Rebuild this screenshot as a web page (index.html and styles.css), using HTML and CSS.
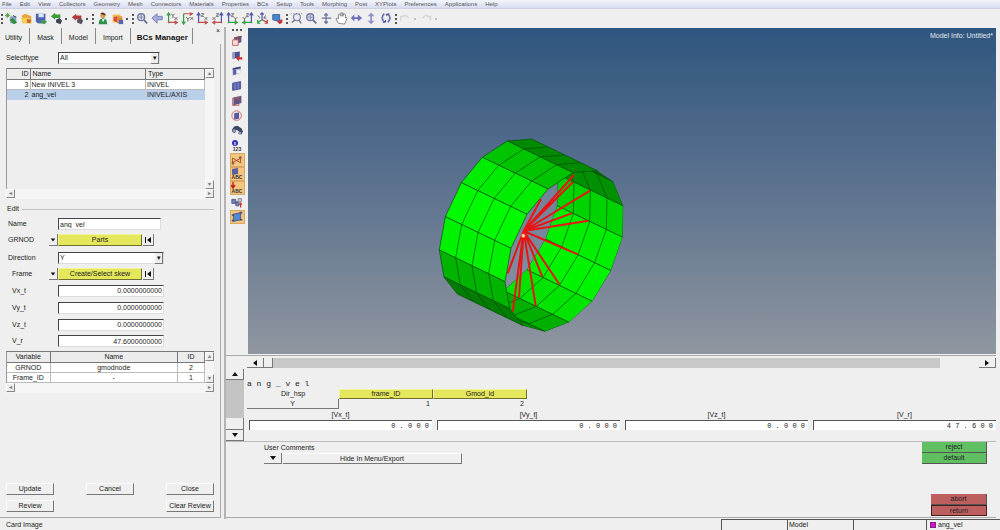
FILE: index.html
```html
<!DOCTYPE html>
<html lang="en">
<head>
<meta charset="utf-8">
<title>BCs Manager</title>
<link rel="stylesheet" href="styles.css">
</head>
<body>
<svg class="defs" aria-hidden="true">
  <symbol id="new" viewBox="0 0 15 15"><path d="M3 1v6M0 4h6M1 2l4 4M5 2L1 6" stroke="#4a9a3a"/><path d="M6 5h7v8H6z" fill="#8aa0c8"/><path d="M5 9l4-2 5 5-4 2z" fill="#2f8f3a"/><path d="M9 4l4 2" stroke="#333"/></symbol>
  <symbol id="open" viewBox="0 0 15 15"><path d="M2 4l4-2 7 3v8H3z" fill="#e9a63c"/><path d="M1 7h10l3 6H3z" fill="#f7cf5b"/><path d="M8 8l5 1-1 4-4-1z" fill="#c76a28"/></symbol>
  <symbol id="save" viewBox="0 0 15 15"><path d="M1 2h11v11H3L1 11z" fill="#4d62b5"/><path d="M4 2h6v4H4z" fill="#dfe6f5"/><path d="M4 9h7v4H4z" fill="#52708f"/><path d="M8 9l6 2-3 3-4-2z" fill="#3d9b52"/></symbol>
  <symbol id="import" viewBox="0 0 15 15"><path d="M1 5l5-4v2h6v4H6v2z" fill="#3d9b3a"/><path d="M7 9l4-2 3 3-2 4-5-2z" fill="#3b4450"/></symbol>
  <symbol id="export" viewBox="0 0 15 15"><path d="M1 6l5-4v2h6v4H6v2z" fill="#b5393d"/><path d="M7 9l4-2 3 3-2 4-5-2z" fill="#5a5260"/></symbol>
  <symbol id="user" viewBox="0 0 15 15"><circle cx="8" cy="4" r="3" fill="#d8a05a"/><path d="M5 2q3-3 6 1v1L7 3z" fill="#5b3a1c"/><path d="M3 14l1-5 4-2 4 2 1 5z" fill="#2d8c45"/><path d="M7 8l1 4 2-4z" fill="#fff"/></symbol>
  <symbol id="pages" viewBox="0 0 15 15"><path d="M2 3h9v9H2z" fill="#f2b84e"/><path d="M3 6l4-1v7l-4-2z" fill="#d94a3c"/><path d="M7 5h6v8H7z" fill="#e58e35"/><path d="M9 9h5v5H9z" fill="#5067b0"/></symbol>
  <symbol id="zoom" viewBox="0 0 15 15"><circle cx="6" cy="6" r="4" fill="#d8daec" stroke="#7077a5" stroke-width="1.5"/><path d="M9 9l4 4" stroke="#666a8c" stroke-width="2"/><path d="M3 6h6M6 3v6" stroke="#8085ad"/></symbol>
  <symbol id="zoomout" viewBox="0 0 15 15"><circle cx="8" cy="6" r="4" fill="#e8e9f4" stroke="#8086ad" stroke-width="1.4"/><path d="M10 9l3 4M2 12l4-3" stroke="#666a8c" stroke-width="1.5"/><path d="M1 2h13" stroke="#777" stroke-dasharray="1 2"/></symbol>
  <symbol id="back" viewBox="0 0 15 15"><path d="M1 7l6-5v3h6v4H7v4z" fill="#a6acde" stroke="#7278b8"/></symbol>
  <symbol id="ax1" viewBox="0 0 15 15"><path d="M3 13V2M1 4l2-3 2 3" fill="none" stroke="#34a046" stroke-width="1.4"/><path d="M2 12h10M10 10l3 2-3 2" fill="none" stroke="#c0504c" stroke-width="1.4"/><path d="M6 2l2 2 2-2M8 4v3M10 6l3 3M13 6l-3 3" fill="none" stroke="#555"/></symbol>
  <symbol id="ax2" viewBox="0 0 15 15"><path d="M3 2h10M10 1l3 1-3 2" fill="none" stroke="#c0504c" stroke-width="1.4"/><path d="M3 2v11M1 11l2 3 2-3" fill="none" stroke="#34a046" stroke-width="1.4"/><path d="M6 6l2 2 2-2M8 8v3M11 6l3 3M14 6l-3 3" fill="none" stroke="#555"/></symbol>
  <symbol id="ax3" viewBox="0 0 15 15"><path d="M3 13V2M1 4l2-3 2 3" fill="none" stroke="#4d55b0" stroke-width="1.4"/><path d="M2 12h10M10 10l3 2-3 2" fill="none" stroke="#c0504c" stroke-width="1.4"/><path d="M6 2h3L6 5h3M10 6l3 3M13 6l-3 3" fill="none" stroke="#555"/></symbol>
  <symbol id="ax4" viewBox="0 0 15 15"><path d="M12 13V2M10 4l2-3 2 3" fill="none" stroke="#4d55b0" stroke-width="1.4"/><path d="M13 12H3M5 10l-3 2 3 2" fill="none" stroke="#c0504c" stroke-width="1.4"/><path d="M6 2h3L6 5h3M2 6l3 3M5 6L2 9" fill="none" stroke="#555"/></symbol>
  <symbol id="ax5" viewBox="0 0 15 15"><path d="M3 13V2M1 4l2-3 2 3" fill="none" stroke="#4d55b0" stroke-width="1.4"/><path d="M2 12h10M10 10l3 2-3 2" fill="none" stroke="#34a046" stroke-width="1.4"/><path d="M6 2h3L6 5h3M9 6l2 2 2-2M11 8v2" fill="none" stroke="#555"/></symbol>
  <symbol id="ax6" viewBox="0 0 15 15"><path d="M12 13V2M10 4l2-3 2 3" fill="none" stroke="#4d55b0" stroke-width="1.4"/><path d="M13 12H3M5 10l-3 2 3 2" fill="none" stroke="#34a046" stroke-width="1.4"/><path d="M6 2h3L6 5h3M2 6l2 2 2-2M4 8v2" fill="none" stroke="#555"/></symbol>
  <symbol id="iso" viewBox="0 0 15 15"><path d="M7 9V1M5 3l2-2 2 2" fill="none" stroke="#4d55b0" stroke-width="1.4"/><path d="M7 9l-5 3M2 9v4h3" fill="none" stroke="#34a046" stroke-width="1.4"/><path d="M7 9l6 3M10 13h3V9" fill="none" stroke="#b64848" stroke-width="1.4"/><path d="M2 4l3 3M11 4l-2 3h3" fill="none" stroke="#555"/></symbol>
  <symbol id="flag" viewBox="0 0 15 15"><path d="M2 3h8v8l-8-2z" fill="#4a86cf" stroke="#2e5f9e"/><path d="M7 11l6-3v4l-3 2z" fill="#c92f2f"/></symbol>
  <symbol id="move" viewBox="0 0 15 15"><path d="M7 2v11M2 7h11M5 4l2-2 2 2M5 11l2 2 2-2" fill="none" stroke="#70759f" stroke-width="1.5"/></symbol>
  <symbol id="hand" viewBox="0 0 15 15"><path d="M4 13L1 8l2-1 1 1V3l2-1 1 3V1h2v4l1-3 2 1v4l1-1 1 1-3 7z" fill="#fff" stroke="#777"/></symbol>
  <symbol id="horiz" viewBox="0 0 15 15"><path d="M1 7l4-4v3h4V3l5 4-5 4V8H5v3z" fill="#6b6fba"/></symbol>
  <symbol id="vert" viewBox="0 0 15 15"><path d="M7 1l4 4H8v5h3l-4 4-4-4h3V5H3z" fill="#8c90c9"/></symbol>
  <symbol id="rotate" viewBox="0 0 15 15"><path d="M5 2Q0 7 5 12M9 2q5 5 0 10" fill="none" stroke="#6d71b4" stroke-width="2"/><path d="M3 12h4V9zM11 2H7v3z" fill="#45498e"/></symbol>
  <symbol id="undo" viewBox="0 0 15 15"><path d="M2 10V5h4M2 7q5-6 9 0" fill="none" stroke="#d5d5d5" stroke-width="1.6"/></symbol>
  <symbol id="redo" viewBox="0 0 15 15"><path d="M12 10V5H8M12 7Q7 1 3 7" fill="none" stroke="#d5d5d5" stroke-width="1.6"/></symbol>
  <symbol id="box1" viewBox="0 0 15 15"><path d="M4 3l9-2v8l-9 3z" fill="#5f5a86"/><path d="M2 6h7v7H2z" fill="#f6dcdc" stroke="#c65353"/><path d="M4 3l9-2v2L4 5z" fill="#8b4350"/></symbol>
  <symbol id="box2" viewBox="0 0 15 15"><path d="M2 3l9-1v7l-9 2z" fill="#4c4f8e"/><path d="M2 3l3 0v8l-3 0z" fill="#9398c7"/><path d="M6 10l4-3v2h4v3h-4v2z" fill="#d02b2b"/></symbol>
  <symbol id="box3" viewBox="0 0 15 15"><path d="M2 4l10-2v8l-10 3z" fill="#9aa0c4"/><path d="M2 4l10-2v2L2 6z" fill="#404377"/><path d="M7 6h5v4l-5 1z" fill="#eef"/><path d="M3 6h3v6H3z" fill="#555b91"/></symbol>
  <symbol id="box4" viewBox="0 0 15 15"><path d="M2 4l10-2v9l-10 2z" fill="#5a62ae" stroke="#42477f"/><path d="M5 4v8M9 3v8" stroke="#8b92d0"/></symbol>
  <symbol id="box5" viewBox="0 0 15 15"><path d="M3 3l10-2v9l-10 3z" fill="#6c567f"/><path d="M2 4h8v9H2z" fill="none" stroke="#b84e50"/><path d="M5 6h5v5H5z" fill="#51568f"/></symbol>
  <symbol id="box6" viewBox="0 0 15 15"><circle cx="7" cy="7" r="6" fill="#f5e3e3" stroke="#c65b5b"/><path d="M4 4l6-1v8l-6 1z" fill="#555ba0"/></symbol>
  <symbol id="bino" viewBox="0 0 15 15"><path d="M1 6l3-4 4-1 5 3 2 4-2 4-4-1 1-3-3-2-2 4-3-1z" fill="#3d4562"/><circle cx="4" cy="7" r="2" fill="#8b9ac4"/><circle cx="11" cy="10" r="2" fill="#8b9ac4"/></symbol>
  <symbol id="info" viewBox="0 0 12 7"><circle cx="4" cy="3" r="3" fill="#3434b8"/><path d="M4 2v3" stroke="#fff"/></symbol>
  <symbol id="line" viewBox="0 0 15 15"><path d="M2 12V5l10 6V3" fill="none" stroke="#7b4b28"/><path d="M1 11l12-6" stroke="#d02b2b"/><path d="M1 10h3v3H1zM10 3h3v3h-3z" fill="#8e5c54"/></symbol>
  <symbol id="cube" viewBox="0 0 12 7"><path d="M1 1l6-1v6l-6 1z" fill="#5a5fa5"/></symbol>
  <symbol id="load" viewBox="0 0 12 7"><path d="M2 0v6M0 3l2 3 2-3" fill="none" stroke="#b22" stroke-width="1.4"/></symbol>
  <symbol id="parts" viewBox="0 0 15 15"><path d="M1 3h5v5H1zM6 6h4v5H6z" fill="#7280b2" stroke="#4b5385"/><path d="M9 2h4v4H9z" fill="#c9cde5" stroke="#777"/><path d="M12 7v6M10 9h4" stroke="#c33" stroke-width="1.5"/></symbol>
  <symbol id="mesh" viewBox="0 0 15 15"><path d="M3 4l9-2v9l-9 2z" fill="#4f8bd1" stroke="#444a80"/><path d="M1 5h3M11 2h3M1 12h3M11 11h3" stroke="#444a80" stroke-width="2"/></symbol>
  <symbol id="first" viewBox="0 0 8 8"><path d="M1 1h1v6H1zM7 1v6L3 4z" fill="#111"/></symbol>
  <symbol id="down" viewBox="0 0 8 8"><path d="M1 2h6L4 6z" fill="#111"/></symbol>
  <symbol id="up" viewBox="0 0 8 8"><path d="M1 6h6L4 2z" fill="#111"/></symbol>
  <symbol id="left" viewBox="0 0 8 8"><path d="M6 1v6L2 4z" fill="#111"/></symbol>
  <symbol id="right" viewBox="0 0 8 8"><path d="M2 1v6l4-3z" fill="#111"/></symbol>
</svg>

<nav class="menubar">
  <button>File</button><button>Edit</button><button>View</button><button>Collectors</button><button>Geometry</button><button>Mesh</button><button>Connectors</button><button>Materials</button><button>Properties</button><button>BCs</button><button>Setup</button><button>Tools</button><button>Morphing</button><button>Post</button><button>XYPlots</button><button>Preferences</button><button>Applications</button><button>Help</button>
</nav>

<div class="toolbar">
  <i class="grip"></i>
  <button aria-label="New"><svg><use href="#new"/></svg></button>
  <button aria-label="Open"><svg><use href="#open"/></svg></button>
  <button aria-label="Save"><svg><use href="#save"/></svg></button>
  <button aria-label="Import"><svg><use href="#import"/></svg></button><i class="more"></i>
  <button aria-label="Export"><svg><use href="#export"/></svg></button><i class="more"></i>
  <i class="grip"></i>
  <button aria-label="User profile"><svg><use href="#user"/></svg></button>
  <button aria-label="Pages"><svg><use href="#pages"/></svg></button><i class="more"></i>
  <i class="grip"></i>
  <button aria-label="Fit"><svg><use href="#zoom"/></svg></button>
  <button aria-label="Previous view"><svg><use href="#back"/></svg></button>
  <button aria-label="XY view"><svg><use href="#ax1"/></svg></button>
  <button aria-label="YX view"><svg><use href="#ax2"/></svg></button>
  <button aria-label="XZ view"><svg><use href="#ax3"/></svg></button>
  <button aria-label="ZX view"><svg><use href="#ax4"/></svg></button>
  <button aria-label="YZ view"><svg><use href="#ax5"/></svg></button>
  <button aria-label="ZY view"><svg><use href="#ax6"/></svg></button>
  <button aria-label="Iso view"><svg><use href="#iso"/></svg></button>
  <button aria-label="Reverse view"><svg><use href="#flag"/></svg></button>
  <i class="grip"></i>
  <button aria-label="Zoom out"><svg><use href="#zoomout"/></svg></button>
  <button aria-label="Circle zoom"><svg><use href="#zoom"/></svg></button>
  <button aria-label="Center"><svg><use href="#move"/></svg></button>
  <button aria-label="Pan"><svg><use href="#hand"/></svg></button>
  <button aria-label="Rotate horizontally"><svg><use href="#horiz"/></svg></button>
  <button aria-label="Rotate vertically"><svg><use href="#vert"/></svg></button>
  <button aria-label="Spin"><svg><use href="#rotate"/></svg></button>
  <i class="grip"></i>
  <button aria-label="Undo"><svg><use href="#undo"/></svg></button><i class="more faint"></i>
  <button aria-label="Redo"><svg><use href="#redo"/></svg></button><i class="more faint"></i>
</div>

<main class="main">
  <aside class="panel">
    <div class="tabs">
      <button>Utility</button><button>Mask</button><button>Model</button><button>Import</button><button class="active">BCs Manager</button>
      <button class="close" aria-label="Close panel">×</button>
    </div>
    <div class="panel-body">
      <div class="field type-row">
        <label for="type">Selecttype</label>
        <span class="combo"><select id="type"><option>All</option></select></span>
      </div>

      <div class="listbox">
        <div class="list-main">
          <table class="grid bcs">
            <colgroup><col class="c-id"><col><col class="c-type"></colgroup>
            <thead><tr><th class="num">ID</th><th>Name</th><th>Type</th></tr></thead>
            <tbody>
              <tr><td class="num">3</td><td>New INIVEL 3</td><td>INIVEL</td></tr>
              <tr class="selected"><td class="num">2</td><td>ang_vel</td><td>INIVEL/AXIS</td></tr>
            </tbody>
          </table>
          <div class="vbar"><button aria-label="Scroll up">▴</button><button aria-label="Scroll down">▾</button></div>
        </div>
        <div class="hbar"><button aria-label="Scroll left">◂</button><button aria-label="Scroll right">▸</button></div>
      </div>

      <fieldset class="form">
        <legend>Edit</legend>
        <div class="field"><label for="name">Name</label><i></i><input class="short" id="name" value="ang_vel"></div>
        <div class="field"><span>GRNOD</span><button class="drop" aria-label="GRNOD options"><svg><use href="#down"/></svg></button><span class="pick"><button class="yellow">Parts</button><button class="reset" aria-label="Reset GRNOD"><svg><use href="#first"/></svg></button></span></div>
        <div class="field direction"><label for="dir">Direction</label><i></i><span class="combo"><select id="dir"><option>Y</option></select></span></div>
        <div class="field sub"><span>Frame</span><button class="drop" aria-label="Frame options"><svg><use href="#down"/></svg></button><span class="pick"><button class="yellow">Create/Select skew</button><button class="reset" aria-label="Reset frame"><svg><use href="#first"/></svg></button></span></div>
        <div class="field sub value"><label for="vx">Vx_t</label><i></i><input class="num" id="vx" value="0.0000000000"></div>
        <div class="field sub value"><label for="vy">Vy_t</label><i></i><input class="num" id="vy" value="0.0000000000"></div>
        <div class="field sub value"><label for="vz">Vz_t</label><i></i><input class="num" id="vz" value="0.0000000000"></div>
        <div class="field sub"><label for="vr">V_r</label><i></i><input class="num" id="vr" value="47.6000000000"></div>
      </fieldset>

      <div class="vars">
        <div class="list-main">
          <table class="grid centered">
            <colgroup><col class="c-var"><col><col class="c-vid"></colgroup>
            <thead><tr><th>Variable</th><th>Name</th><th>ID</th></tr></thead>
            <tbody>
              <tr><td>GRNOD</td><td>gmodnode</td><td>2</td></tr>
              <tr><td>Frame_ID</td><td>-</td><td>1</td></tr>
            </tbody>
          </table>
          <div class="vbar"><button aria-label="Scroll up">▴</button><button aria-label="Scroll down">▾</button></div>
        </div>
        <div class="hbar"><button aria-label="Scroll left">◂</button><button aria-label="Scroll right">▸</button></div>
      </div>

      <div class="actions">
        <button>Update</button><button>Cancel</button><button>Close</button>
        <button>Review</button><i></i><button>Clear Review</button>
      </div>
    </div>
  </aside>

  <section class="work">
    <div class="stage">
      <div class="sidebar">
        <i class="hgrip"></i>
        <button aria-label="Mask"><svg><use href="#box1"/></svg></button>
        <button aria-label="Reverse"><svg><use href="#box2"/></svg></button>
        <button aria-label="Unmask adjacent"><svg><use href="#box3"/></svg></button>
        <button aria-label="Unmask all"><svg><use href="#box4"/></svg></button>
        <button aria-label="Mask outside"><svg><use href="#box5"/></svg></button>
        <button aria-label="Spherical clipping"><svg><use href="#box6"/></svg></button>
        <button aria-label="Find"><svg><use href="#bino"/></svg></button>
        <button class="tagged"><svg><use href="#info"/></svg>123</button>
        <button class="on" aria-label="Elements"><svg><use href="#line"/></svg></button>
        <button class="on tagged"><svg><use href="#cube"/></svg>ABC</button>
        <button class="on tagged"><svg><use href="#load"/></svg>ABC</button>
        <button aria-label="Components"><svg><use href="#parts"/></svg></button>
        <button class="on" aria-label="Mesh"><svg><use href="#mesh"/></svg></button>
      </div>
      <div class="viewport">
        <svg class="model" viewBox="248 28 748 326" role="img" aria-label="Cylinder mesh with rigid spider">
          <defs>
            <clipPath id="mouth"><path d="M502 122 550 155 580 228 578 322 543 422 487 514 417 577 345 605 279 587 239 536 225 455 243 355 291 253 354 177 429 128z"/></clipPath>
            <path id="rimIn" d="M305 27 353 60 383 133 381 227 346 327 290 419 220 482 148 510 82 492"/>
            <path id="rimOut" d="M305 27 232 33 157 82 94 158 46 260 28 360 42 441 82 492"/>
            <linearGradient id="hole" x1="0" y1="0" x2="0" y2="1"><stop offset="0" stop-color="#687b95"/><stop offset="1" stop-color="#85909f"/></linearGradient>
          </defs>
          <g transform="translate(430 130) scale(.3333)" stroke="#064b06" stroke-width="2" stroke-linejoin="round">
            <g clip-path="url(#mouth)">
              <path d="M305 27 353 60 550 155 502 122z" fill="#006c00"/>
              <path d="M353 60 383 133 580 228 550 155z" fill="#009000"/>
              <path d="M383 133 381 227 578 322 580 228z" fill="#00d400"/>
              <path d="M381 227 346 327 543 422 578 322z" fill="#00ee00"/>
              <path d="M346 327 290 419 487 514 543 422z" fill="#00f400"/>
              <path d="M290 419 220 482 417 577 487 514z" fill="#00e400"/>
              <path d="M220 482 148 510 345 605 417 577z" fill="#00b000"/>
              <path d="M148 510 82 492 279 587 345 605z" fill="#009200"/>
              <g fill="none">
                <use href="#rimIn" transform="translate(49 24)"/><use href="#rimIn" transform="translate(98 48)"/><use href="#rimIn" transform="translate(148 71)"/>
              </g>
              <path d="M305 27 353 60 383 133 381 227 346 327 290 419 220 482 148 510 82 492 42 441 28 360 46 260 94 158 157 82 232 33z" fill="url(#hole)" stroke="none"/>
            </g>
            <path d="M305 27 232 33 429 128 502 122z" fill="#008a00"/>
            <path d="M232 33 157 82 354 177 429 128z" fill="#00c400"/>
            <path d="M157 82 94 158 291 253 354 177z" fill="#00ec00"/>
            <path d="M94 158 46 260 243 355 291 253z" fill="#00fa00"/>
            <path d="M46 260 28 360 225 455 243 355z" fill="#00f200"/>
            <path d="M28 360 42 441 239 536 225 455z" fill="#00b400"/>
            <path d="M42 441 82 492 279 587 239 536z" fill="#007d00"/>
            <g fill="none">
              <use href="#rimOut" transform="translate(49 24)"/><use href="#rimOut" transform="translate(98 48)"/><use href="#rimOut" transform="translate(148 71)"/>
            </g>
            <path d="M281 303 432 135M281 303 428 157M281 303 480 182M281 303 425 250M281 303 475 272M281 303 443 373M281 303 388 463M281 303 337 440M281 303 317 527M281 303 248 545M281 303 267 502M281 303 333 208M281 303 233 430" fill="none" stroke="#e81414" stroke-width="6"/>
            <circle cx="280" cy="317" r="6" fill="#ffd9a0" stroke="#f33"/>
          </g>
        </svg>
        <p class="model-info">Model Info: Untitled*</p>
      </div>
    </div>

    <div class="card">
      <div class="card-hscroll"><button aria-label="Scroll left"><svg><use href="#left"/></svg></button><i class="thumb"></i><i class="track"></i><i class="gap"></i><button aria-label="Scroll right"><svg><use href="#right"/></svg></button></div>
      <div class="card-main">
        <div class="card-vscroll"><button aria-label="Scroll up"><svg><use href="#up"/></svg></button><i class="track"></i><i class="thumb"></i><button aria-label="Scroll down"><svg><use href="#down"/></svg></button></div>
        <div class="card-body">
          <p class="mono title">a n g _ v e l</p>
          <div class="ids">
            <span>Dir_hsp</span><button class="yellow">frame_ID</button><button class="yellow">Gmod_id</button>
            <button class="dir-value">Y</button><span class="id-value">1</span><span class="id-value">2</span>
          </div>
          <div class="values">
            <label>[Vx_t]<input class="mono" value="0 . 0 0 0"></label>
            <label>[Vy_t]<input class="mono" value="0 . 0 0 0"></label>
            <label>[Vz_t]<input class="mono" value="0 . 0 0 0"></label>
            <label>[V_r]<input class="mono" value="4 7 . 6 0 0"></label>
          </div>
        </div>
      </div>
      <div class="card-foot">
        <div class="comments">
          <span>User Comments</span>
          <div class="comment-pick"><button class="pop" aria-label="Choose comment option"><svg><use href="#down"/></svg></button><button class="wide">Hide In Menu/Export</button></div>
        </div>
        <div class="verdict">
          <div class="pair"><button class="green">reject</button><button class="green">default</button></div>
          <div class="pair narrow"><button class="red">abort</button><button class="red return">return</button></div>
        </div>
      </div>
    </div>
  </section>
</main>

<footer class="status">
  <span class="message">Card Image</span><span class="cell"></span><span class="cell">Model</span><span class="cell mid"></span><span class="cell last"><i class="swatch"></i>ang_vel</span>
</footer>
</body>
</html>
```
FILE: styles.css
```css
* { box-sizing: border-box; margin: 0; padding: 0; }
html, body { height: 100%; }
body {
  display: flex; flex-direction: column;
  background: #efefef; color: #222;
  font: 7px/10px "Liberation Sans", Arial, sans-serif;
}
button, input, select { font: inherit; color: inherit; border: 0; border-radius: 0; background: none; outline: 0; min-width: 0; }
button { display: flex; align-items: center; justify-content: center; white-space: nowrap; }
svg { display: block; }
i { font-style: normal; }
.defs { position: absolute; width: 0; height: 0; }
.mono { font-family: "Liberation Mono", monospace; }

/* Menu and toolbar */
.menubar { display: flex; gap: 8px; height: 9px; padding-left: 2px; background: linear-gradient(#f2f4fb, #d9dcf0); border-bottom: 1px solid #cfd2e2; font-size: 6px; line-height: 8px; color: #555; }
.toolbar { display: flex; align-items: center; height: 18px; padding-top: 1px; }
.toolbar button { flex: 0 0 15px; height: 15px; }
.toolbar svg { width: 13px; height: 13px; }
.grip { flex: 0 0 4px; height: 12px; background: radial-gradient(circle at 2px 2px, #555 1px, transparent 1px) 0 0 / 4px 4px; }
.more { flex: 0 0 6px; height: 2px; background: linear-gradient(#555, #555) 1px 0 / 2px 2px no-repeat; }
.more.faint { opacity: .3; }

.main { flex: 1; display: flex; min-height: 0; }

/* Left panel */
.panel { flex: 0 0 226px; display: flex; flex-direction: column; border-right: 2px solid #b3b3b3; padding: 1px 3px 1px 0; }
.tabs { display: flex; align-items: stretch; height: 16px; }
.tabs button { padding: 3px 7px 0; border-right: 1px solid #888; }
.tabs button:first-child { padding-left: 5px; }
.tabs .active { font-weight: bold; font-size: 8px; color: #111; padding: 3px 4px 0 6px; }
.tabs .close { margin-left: auto; border: 0; padding: 0 1px; height: 6px; line-height: 6px; }
.panel-body { flex: 1; display: flex; flex-direction: column; padding: 7px 6px 5px; border-right: 1px solid #aaa; border-bottom: 1px solid #aaa; }
.field { display: grid; grid-template-columns: 43px 9px 106px; align-items: center; height: 12px; }
.field.value { height: 13px; }
.type-row { grid-template-columns: 52px 102px; height: 14px; }
.combo { position: relative; display: block; }
.combo select, .field input { display: block; width: 100%; height: 12px; appearance: none; background: #fff; border: 1px solid #ddd; border-top-color: #444; border-left-color: #444; padding: 0 1px; line-height: 10px; }
.combo::after { content: "▾"; position: absolute; top: 1px; right: 1px; width: 7px; height: 10px; line-height: 9px; text-align: center; background: #eee; border-right: 1px solid #777; border-bottom: 1px solid #777; pointer-events: none; color: #111; }
.field .short { width: 103px; }
.num { text-align: right; }

.listbox { display: flex; flex-direction: column; height: 131px; margin-top: 3px; flex-shrink: 0; }
.list-main { flex: 1; display: flex; align-items: stretch; background: #eee; border-top: 1px solid #777; border-left: 1px solid #999; }
.grid { flex: 1; align-self: flex-start; border-collapse: collapse; table-layout: fixed; width: 100%; }
.grid th { height: 10px; font-weight: normal; text-align: left; background: #ececec; border-right: 1px solid #777; border-bottom: 1px solid #777; line-height: 9px; padding: 0 2px; }
.grid td { height: 10px; line-height: 9px; background: #fff; border-right: 1px solid #bbb; border-bottom: 1px solid #bbb; padding: 0 1px; }
.grid .num { text-align: right; padding-right: 1px; }
.grid .selected td { background: #bacfea; border-color: #bacfea; }
.centered th, .centered td { text-align: center; }
.c-id { width: 23px; } .c-type { width: 59px; } .c-var { width: 43px; } .c-vid { width: 27px; }
.vbar { flex: 0 0 9px; display: flex; flex-direction: column; justify-content: space-between; background: #f5f5f5; }
.hbar { display: flex; justify-content: space-between; height: 10px; background: #f5f5f5; }
.vbar button, .hbar button { width: 9px; height: 9px; background: #eee; border: 1px solid #fff; border-right-color: #888; border-bottom-color: #888; color: #777; line-height: 7px; font-size: 6px; }

.form { border: 0; display: flex; flex-direction: column; gap: 4px; margin-top: 5px; }
.form legend { display: flex; align-items: center; width: 100%; height: 10px; margin-bottom: 4px; padding-left: 1px; gap: 3px; }
.form legend::after { content: ""; flex: 1; height: 1px; background: #c4c4c4; }
.form .field > :first-child { padding-left: 2px; }
.form .sub > :first-child { padding-left: 6px; }
.direction { margin-top: 2px; }
.drop { height: 12px; border-right: 1px solid #777; border-bottom: 1px solid #777; }
.drop svg { width: 6px; height: 6px; }
.pick { display: grid; grid-template-columns: 84px 11px; gap: 1px; }
.yellow { height: 12px; background: #e4e65c; border: 1px solid #f3f49a; border-right-color: #6f6f32; border-bottom-color: #6f6f32; }
.reset { height: 12px; border-right: 1px solid #777; border-bottom: 1px solid #777; }
.reset svg { width: 8px; height: 8px; }
.vars { margin-top: 4px; }
.actions { display: grid; grid-template-columns: 48px 48px 48px; justify-content: space-between; row-gap: 5px; margin-top: auto; }
.actions button { height: 12px; border: 1px solid #fafafa; border-right-color: #777; border-bottom-color: #777; }

/* Graphics area */
.work { flex: 1; min-width: 0; display: flex; flex-direction: column; padding-right: 4px; }
.stage { flex: 1; display: flex; min-height: 0; }
.sidebar { flex: 0 0 22px; display: flex; flex-direction: column; align-items: center; }
.hgrip { width: 13px; height: 6px; background: radial-gradient(circle at 2px 3px, #555 1px, transparent 1px) 0 0 / 4px 6px; }
.sidebar button { flex: 0 0 15px; width: 15px; }
.sidebar svg { width: 12px; height: 12px; }
.sidebar .on { flex-basis: 14px; background: #f6c57e; border: 1px solid #d9a766; }
.sidebar .tagged { flex-direction: column; font-size: 5px; font-weight: bold; line-height: 5px; color: #333; }
.sidebar .tagged svg { height: 7px; }
.viewport { position: relative; flex: 1; min-width: 0; margin-top: 1px; background: linear-gradient(#2f567f, #5d738f 50%, #8f969f); }
.model { position: absolute; inset: 0; width: 100%; height: 100%; }
.model-info { position: absolute; top: 3px; right: 3px; color: #e4e9ef; }

/* Card editor */
.card { flex: 0 0 auto; border-bottom: 1px solid #aaa; margin-bottom: 1px; }
.card svg { width: 8px; height: 8px; }
.card-hscroll { display: flex; height: 14px; margin-top: 1px; padding: 2px 0 1px 21px; border-top: 1px solid #aaa; }
.card-hscroll button { flex: 0 0 17px; border-right: 1px solid #777; border-bottom: 1px solid #777; }
.card-hscroll .thumb { flex: 0 0 9px; border-right: 1px solid #777; border-bottom: 1px solid #777; }
.card-hscroll .track { flex: 1; background: #c8c8c8; }
.card-hscroll .gap { flex: 0 0 39px; }
.card-main { display: flex; height: 73px; border-bottom: 1px solid #bbb; }
.card-vscroll { flex: 0 0 18px; display: flex; flex-direction: column; }
.card-vscroll button { height: 11px; border-right: 1px solid #777; border-bottom: 1px solid #777; }
.card-vscroll .track { flex: 1; background: #c4c4c4; }
.card-vscroll .thumb { height: 12px; border-right: 1px solid #777; border-bottom: 1px solid #777; }
.card-body { flex: 1; padding: 10px 0 0 3px; }
.title { font-size: 8px; }
.ids { display: grid; grid-template-columns: 92px 94px 94px; grid-auto-rows: 10px; text-align: center; }
.ids .yellow { height: 10px; line-height: 8px; }
.dir-value { border-right: 1px solid #777; border-bottom: 1px solid #777; }
.id-value { text-align: right; padding-right: 3px; }
.values { display: grid; grid-template-columns: repeat(4, 1fr); gap: 5px; padding: 1px 0 0 2px; }
.values label { text-align: center; }
.values input { display: block; width: 100%; height: 10px; background: #fff; border-top: 1px solid #555; border-left: 1px solid #555; padding-right: 3px; text-align: right; font-family: "Liberation Mono", monospace; }
.card-foot { display: flex; justify-content: space-between; padding: 0 9px 1px 38px; }
.comments { padding-top: 1px; }
.comment-pick { display: flex; gap: 1px; }
.comment-pick button { height: 11px; border-right: 1px solid #777; border-bottom: 1px solid #777; }
.pop { width: 18px; }
.wide { width: 179px; border-top: 1px solid #fff; }
.verdict { width: 65px; }
.pair button { width: 100%; height: 11px; border-right: 1px solid #555; border-bottom: 1px solid #555; }
.pair.narrow { width: 56px; margin: 30px 0 0 auto; }
.green { background: #5fbf61; }
.red { background: #be5f5f; }
.pair .return { border: 1px solid #471f1f; }

/* Status bar */
.status { display: flex; height: 11px; line-height: 11px; }
.message { flex: 1; padding-left: 6px; }
.cell { flex: 0 0 66px; border-top: 1px solid #555; border-left: 1px solid #555; padding-left: 1px; line-height: 10px; }
.cell.mid { flex-basis: 73px; }
.cell.last { flex-basis: 74px; display: flex; align-items: center; gap: 2px; padding-left: 3px; }
.swatch { width: 6px; height: 6px; background: #d414c8; border: 1px solid #802080; }
```
